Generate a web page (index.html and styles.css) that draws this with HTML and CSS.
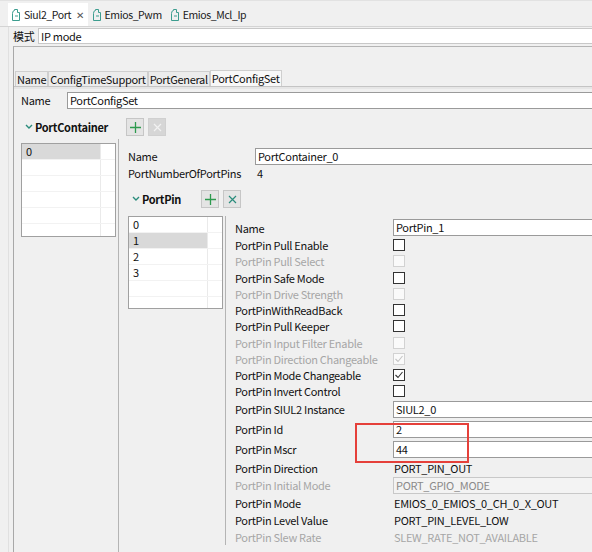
FILE: index.html
```html
<!DOCTYPE html>
<html lang="zh">
<head>
    <meta charset="UTF-8">
    <meta name="viewport" content="width=device-width, initial-scale=1.0">
    <title>Siul2_Port</title>
    <link rel="stylesheet" href="styles.css">
</head>
<body>
    <div class="editor-tabs">
        <div class="etab active">
            <svg class="ticon" width="11" height="14" viewBox="0 0 11 14"><path d="M1.5 5.5q0-3 2-3v-1h3v3h2v8h-7z" fill="none" stroke="#3c9d8f"/><path d="M4 8h3" stroke="#3c9d8f"/></svg>
            <span>Siul2_Port</span>
            <span class="close">&#x2715;</span>
        </div>
        <div class="etab">
            <svg class="ticon" width="11" height="14" viewBox="0 0 11 14"><path d="M1.5 5.5q0-3 2-3v-1h3v3h2v8h-7z" fill="none" stroke="#3c9d8f"/><path d="M4 8h3" stroke="#3c9d8f"/></svg>
            <span>Emios_Pwm</span>
        </div>
        <div class="etab">
            <svg class="ticon" width="11" height="14" viewBox="0 0 11 14"><path d="M1.5 5.5q0-3 2-3v-1h3v3h2v8h-7z" fill="none" stroke="#3c9d8f"/><path d="M4 8h3" stroke="#3c9d8f"/></svg>
            <span>Emios_Mcl_Ip</span>
        </div>
    </div>

    <div class="editor">
        <div class="mode-row">
            <span class="mode-label">模式</span>
            <div class="field mode-field">IP mode</div>
        </div>

        <div class="box">
            <div class="subtabs">
                <div class="stab">Name</div>
                <div class="stab">ConfigTimeSupport</div>
                <div class="stab">PortGeneral</div>
                <div class="stab active">PortConfigSet</div>
            </div>

            <div class="panel">
                <div class="name-row">
                    <span class="name-label">Name</span>
                    <div class="field">PortConfigSet</div>
                </div>

                <div class="section-head container-head">
                    <svg class="chev" width="8" height="6" viewBox="0 0 8 6"><polyline points="1,1 4,4 7,1" fill="none" stroke="#2a8c7c" stroke-width="1.4"/></svg>
                    <span class="section-title">PortContainer</span>
                    <div class="tool-btns">
                        <div class="tbtn"><svg width="11" height="11" viewBox="0 0 11 11"><path d="M5.5 0v11M0 5.5h11" stroke="#2d9a4e" stroke-width="1.3"/></svg></div>
                        <div class="tbtn disabled"><svg width="9" height="9" viewBox="0 0 9 9"><path d="M1 1l7 7M8 1l-7 7" stroke="#f2f2f2" stroke-width="1.2"/></svg></div>
                    </div>
                </div>

                <div class="split">
                    <div class="container-col">
                        <div class="list">
                            <div class="lrow selected"><span class="lcell">0</span><span class="lpad"></span></div>
                            <div class="lrow"><span class="lcell"></span><span class="lpad"></span></div>
                            <div class="lrow"><span class="lcell"></span><span class="lpad"></span></div>
                            <div class="lrow"><span class="lcell"></span><span class="lpad"></span></div>
                            <div class="lrow"><span class="lcell"></span><span class="lpad"></span></div>
                            <div class="lrow"><span class="lcell"></span><span class="lpad"></span></div>
                        </div>
                    </div>

                    <div class="details">
                        <div class="drow">
                            <span class="dlabel">Name</span>
                            <div class="field">PortContainer_0</div>
                        </div>
                        <div class="drow short">
                            <span class="dlabel">PortNumberOfPortPins</span>
                            <span class="dvalue">4</span>
                        </div>

                        <div class="section-head pin-head">
                            <svg class="chev" width="8" height="6" viewBox="0 0 8 6"><polyline points="1,1 4,4 7,1" fill="none" stroke="#2a8c7c" stroke-width="1.4"/></svg>
                            <span class="section-title">PortPin</span>
                            <div class="tool-btns">
                                <div class="tbtn"><svg width="11" height="11" viewBox="0 0 11 11"><path d="M5.5 0v11M0 5.5h11" stroke="#2d9a4e" stroke-width="1.3"/></svg></div>
                                <div class="tbtn"><svg width="9" height="9" viewBox="0 0 9 9"><path d="M1 1l7 7M8 1l-7 7" stroke="#2a8c7c" stroke-width="1.2"/></svg></div>
                            </div>
                        </div>

                        <div class="pin-split">
                            <div class="pin-col">
                                <div class="list">
                                    <div class="lrow"><span class="lcell">0</span><span class="lpad"></span></div>
                                    <div class="lrow selected"><span class="lcell">1</span><span class="lpad"></span></div>
                                    <div class="lrow"><span class="lcell">2</span><span class="lpad"></span></div>
                                    <div class="lrow"><span class="lcell">3</span><span class="lpad"></span></div>
                                    <div class="lrow"><span class="lcell"></span><span class="lpad"></span></div>
                                    <div class="lrow"><span class="lcell"></span><span class="lpad"></span></div>
                                </div>
                            </div>

                            <div class="props">
                                <div class="prop p-name"><span class="plabel">Name</span><div class="field">PortPin_1</div></div>
                                <div class="prop p-check"><span class="plabel">PortPin Pull Enable</span><span class="cb"></span></div>
                                <div class="prop p-check off"><span class="plabel">PortPin Pull Select</span><span class="cb"></span></div>
                                <div class="prop p-check"><span class="plabel">PortPin Safe Mode</span><span class="cb"></span></div>
                                <div class="prop p-check off"><span class="plabel">PortPin Drive Strength</span><span class="cb"></span></div>
                                <div class="prop p-check"><span class="plabel">PortPinWithReadBack</span><span class="cb"></span></div>
                                <div class="prop p-check"><span class="plabel">PortPin Pull Keeper</span><span class="cb"></span></div>
                                <div class="prop p-check off"><span class="plabel">PortPin Input Filter Enable</span><span class="cb"></span></div>
                                <div class="prop p-check off"><span class="plabel">PortPin Direction Changeable</span><span class="cb"><svg width="10" height="10" viewBox="0 0 10 10"><polyline points="1.5,5 4,7.5 8.5,2" fill="none" stroke="#c4c4c4" stroke-width="1.1"/></svg></span></div>
                                <div class="prop p-check"><span class="plabel">PortPin Mode Changeable</span><span class="cb"><svg width="10" height="10" viewBox="0 0 10 10"><polyline points="1.5,5 4,7.5 8.5,2" fill="none" stroke="#333" stroke-width="1.1"/></svg></span></div>
                                <div class="prop p-check"><span class="plabel">PortPin Invert Control</span><span class="cb"></span></div>
                                <div class="prop p-input first"><span class="plabel">PortPin SIUL2 Instance</span><div class="field">SIUL2_0</div></div>
                                <div class="prop p-input"><span class="plabel">PortPin Id</span><div class="field">2</div></div>
                                <div class="prop p-input"><span class="plabel">PortPin Mscr</span><div class="field">44</div></div>
                                <div class="prop p-text"><span class="plabel">PortPin Direction</span><span class="pvalue">PORT_PIN_OUT</span></div>
                                <div class="prop p-text tall off"><span class="plabel">PortPin Initial Mode</span><div class="field disabled">PORT_GPIO_MODE</div></div>
                                <div class="prop p-text"><span class="plabel">PortPin Mode</span><span class="pvalue">EMIOS_0_EMIOS_0_CH_0_X_OUT</span></div>
                                <div class="prop p-text"><span class="plabel">PortPin Level Value</span><span class="pvalue">PORT_PIN_LEVEL_LOW</span></div>
                                <div class="prop p-text last off"><span class="plabel">PortPin Slew Rate</span><span class="pvalue">SLEW_RATE_NOT_AVAILABLE</span></div>
                            </div>
                        </div>
                    </div>
                </div>
            </div>
        </div>
    </div>

    <div class="mark"></div>
</body>
</html>
```

FILE: styles.css
```css
* {
    margin: 0;
    padding: 0;
    box-sizing: border-box;
}
html, body {
    overflow: hidden;
}
body {
    width: 620px;
    height: 552px;
    background: #f0f0f0;
    font-family: "Noto Sans CJK SC", "Noto Sans", sans-serif;
    font-size: 11px;
    letter-spacing: -0.3px;
    color: #111;
    position: relative;
}

/* editor tabs */
.editor-tabs {
    height: 27px;
    display: flex;
    align-items: flex-end;
    padding-left: 8px;
    border-top: 1px solid #e2e2e2;
    border-bottom: 1px solid #d4d4d4;
}
.etab {
    height: 23px;
    display: flex;
    align-items: center;
    padding: 0 4px 0 4px;
    font-size: 10.5px;
    letter-spacing: -0.4px;
    color: #1a1a1a;
}
.etab.active {
    background: #fff;
    padding: 0 4px 0 3px;
}
.ticon {
    margin-right: 2px;
}
.close {
    margin-left: 5px;
    font-size: 10px;
    color: #555;
}

/* editor body */
.editor {
    margin-left: 8px;
    border-left: 1px solid #e0e0e0;
    padding-left: 4px;
}
.mode-row {
    display: flex;
    align-items: center;
    height: 17px;
}
.mode-label {
    width: 25px;
}
.field {
    flex: 1;
    height: 17px;
    line-height: 15px;
    background: #fff;
    border: 1px solid #9a9a9a;
    padding-left: 2px;
    white-space: nowrap;
}
.mode-field {
    border-color: #c8c8c8;
    border-right: none;
    height: 16px;
    line-height: 14px;
}
.field.disabled {
    background: #f3f3f3;
    border-color: #c8c8c8;
    color: #8a8a8a;
}

.box {
    margin-top: 2px;
    border-top: 1px solid #b4b4b4;
    border-left: 1px solid #a8a8a8;
    padding-top: 24px;
}
.subtabs {
    display: flex;
    height: 15px;
    padding-left: 1px;
}
.stab {
    border: 1px solid #cfcfcf;
    border-bottom: none;
    padding: 0 1px;
    line-height: 14px;
    background: #ececec;
}
.stab.active {
    background: #f8f8f8;
    margin-top: -1px;
    height: 16px;
}

.panel {
    border-top: 1px solid #c4c4c4;
    box-shadow: inset 0 2px 0 #e6e6e6;
    padding-top: 4px;
}
.name-row {
    display: flex;
    align-items: center;
    height: 18px;
    padding-left: 7px;
}
.name-label {
    width: 46px;
}

.section-head {
    display: flex;
    align-items: center;
    height: 18px;
}
.container-head {
    margin-top: 9px;
    padding-left: 11px;
}
.pin-head {
    margin-top: 9px;
    padding-left: 13px;
}
.chev {
    margin-right: 2px;
}
.section-title {
    font-weight: bold;
}
.container-head .section-title {
    width: 91px;
}
.pin-head .section-title {
    width: 59px;
}
.tool-btns {
    display: flex;
    gap: 4px;
}
.tbtn {
    width: 18px;
    height: 18px;
    border: 1px solid #c6c6c6;
    background: #e4e4e4;
    display: flex;
    justify-content: center;
    align-items: center;
}
.tbtn.disabled {
    background: #d6d6d6;
    border-color: #d0d0d0;
}

.split {
    display: flex;
    margin-top: 3px;
}
.container-col {
    width: 105px;
    border-right: 1px solid #b4b4b4;
    padding: 4px 0 0 7px;
}
.list {
    width: 95px;
    height: 94px;
    border: 1px solid #a0a0a0;
    background: #fff;
    overflow: hidden;
}
.lrow {
    display: flex;
    height: 16px;
    border-bottom: 1px solid #f2f2f2;
}
.lcell {
    width: 79px;
    padding-left: 4px;
    line-height: 15px;
    border-right: 1px solid #eaeaea;
}
.lrow.selected .lcell {
    background: #d9d9d9;
}
.lpad {
    flex: 1;
}

.details {
    flex: 1;
    padding: 8px 0 7px 0;
}
.drow {
    display: flex;
    align-items: center;
    height: 18px;
    padding-left: 9px;
}
.drow.short {
    height: 16px;
}
.dlabel {
    width: 127px;
}
.dvalue {
    padding-left: 2px;
}

.pin-split {
    display: flex;
    margin-top: 8px;
}
.pin-col {
    width: 107px;
    border-right: 1px solid #b4b4b4;
    padding-left: 9px;
}
.pin-col .list {
    height: 93px;
}

.props {
    flex: 1;
    padding: 2px 0 0 9px;
}
.prop {
    display: flex;
    align-items: center;
}
.plabel {
    width: 158px;
    flex: none;
    white-space: nowrap;
}
.pvalue {
    padding-left: 1px;
    white-space: nowrap;
}
.p-name { height: 19px; }
.p-check { height: 16.25px; }
.p-input { height: 20px; }
.p-input.first { height: 19.5px; }
.p-text { height: 17px; }
.p-text.tall { height: 18px; }
.p-text.last { height: 17px; }
.prop.off .plabel,
.prop.off .pvalue {
    color: #a6a6a6;
}

.cb {
    width: 12px;
    height: 12px;
    border: 1px solid #333;
    background: #fff;
    display: flex;
    justify-content: center;
    align-items: center;
}
.prop.off .cb {
    border-color: #d2d2d2;
    background: #fafafa;
}

/* screenshot annotation */
.mark {
    position: absolute;
    left: 355px;
    top: 423px;
    width: 114px;
    height: 40px;
    border: 2px solid #e5403a;
}
```
